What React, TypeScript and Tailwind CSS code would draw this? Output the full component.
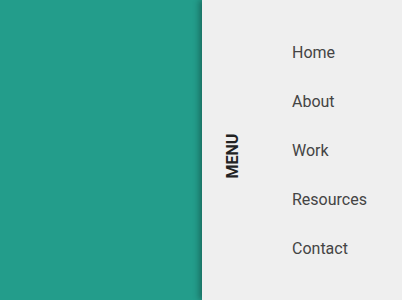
const ITEMS = ['Home', 'About', 'Work', 'Resources', 'Contact']

export default function App() {
  return (
    <div className="flex h-[300px] w-full overflow-hidden font-['Roboto',sans-serif]">
      <div className="flex-1 bg-[#239d8b]" />
      <div className="relative flex w-[200px] bg-[#efefef] shadow-[-3px_0_6px_rgba(0,0,0,0.3)]">
        <div className="flex w-[62px] items-center justify-center pt-[12px]">
          <span className="-rotate-90 text-[16px] font-bold leading-none text-[#222]">MENU</span>
        </div>
        <ul className="ml-[28px] flex flex-col justify-center pt-[2px]">
          {ITEMS.map(item => (
            <li key={item} className="flex h-[49px] items-center text-[16px] text-[#444]">
              {item}
            </li>
          ))}
        </ul>
      </div>
    </div>
  )
}
